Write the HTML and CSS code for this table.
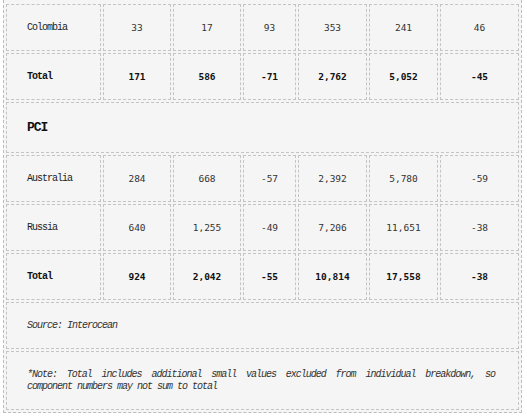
FILE: index.html
```html
<!DOCTYPE html>
<html>
<head>
<meta charset="utf-8">
<link rel="stylesheet" href="styles.css">
</head>
<body>
<table class="data">
  <colgroup>
    <col class="c-label">
    <col class="c-n1">
    <col class="c-n2">
    <col class="c-n3">
    <col class="c-n4">
    <col class="c-n5">
    <col class="c-n6">
  </colgroup>
  <tbody>
    <tr>
      <td class="label">Colombia</td>
      <td class="num">33</td>
      <td class="num">17</td>
      <td class="num">93</td>
      <td class="num">353</td>
      <td class="num">241</td>
      <td class="num">46</td>
    </tr>
    <tr class="total">
      <td class="label">Total</td>
      <td class="num">171</td>
      <td class="num">586</td>
      <td class="num">-71</td>
      <td class="num">2,762</td>
      <td class="num">5,052</td>
      <td class="num">-45</td>
    </tr>
    <tr class="section">
      <td class="heading" colspan="7">PCI</td>
    </tr>
    <tr>
      <td class="label">Australia</td>
      <td class="num">284</td>
      <td class="num">668</td>
      <td class="num">-57</td>
      <td class="num">2,392</td>
      <td class="num">5,780</td>
      <td class="num">-59</td>
    </tr>
    <tr>
      <td class="label">Russia</td>
      <td class="num">640</td>
      <td class="num">1,255</td>
      <td class="num">-49</td>
      <td class="num">7,206</td>
      <td class="num">11,651</td>
      <td class="num">-38</td>
    </tr>
    <tr class="total">
      <td class="label">Total</td>
      <td class="num">924</td>
      <td class="num">2,042</td>
      <td class="num">-55</td>
      <td class="num">10,814</td>
      <td class="num">17,558</td>
      <td class="num">-38</td>
    </tr>
    <tr>
      <td class="foot" colspan="7">Source: Interocean</td>
    </tr>
    <tr class="note-row">
      <td class="foot note" colspan="7">*Note: Total includes additional small values excluded from individual breakdown, so component numbers may not sum to total</td>
    </tr>
  </tbody>
</table>
</body>
</html>
```
FILE: styles.css
```css
html, body {
  margin: 0;
  padding: 0;
  background: #ffffff;
}

.data {
  margin-left: 3px;
  width: 519px;
  table-layout: fixed;
  border-collapse: separate;
  border-spacing: 2px;
  border: 1px dashed #bdbdbd;
  border-top: none;
  padding-top: 2px;
  background: #f5f5f5;
  color: #222;
}

.c-label { width: 95px; }
.c-n1 { width: 68px; }
.c-n2 { width: 68px; }
.c-n3 { width: 53px; }
.c-n4 { width: 69px; }
.c-n5 { width: 69px; }
.c-n6 { width: 79px; }

.data td {
  border: 1px dashed #c4c4c4;
  height: 45px;
  padding: 0;
  vertical-align: middle;
}

.label {
  padding: 0 0 0 20px !important;
  font-family: "Liberation Mono", monospace;
  font-size: 10px;
  letter-spacing: -1px;
  text-align: left;
}

.num {
  font-family: "DejaVu Sans Mono", monospace;
  font-size: 9.5px;
  text-align: center;
  color: #333;
}

.total td {
  font-weight: bold;
  color: #111;
}

.section .heading {
  height: 49px;
  padding: 0 20px !important;
  font-family: "Liberation Mono", monospace;
  font-weight: bold;
  font-size: 13px;
  letter-spacing: -1px;
  color: #111;
}

.foot {
  padding: 0 20px !important;
  font-family: "Liberation Mono", monospace;
  font-style: italic;
  font-size: 10px;
  letter-spacing: -1px;
  line-height: 12px;
  color: #333;
}

.note-row .note {
  height: 57px;
  padding: 0 23px 0 20px !important;
  text-align: justify;
}
```
